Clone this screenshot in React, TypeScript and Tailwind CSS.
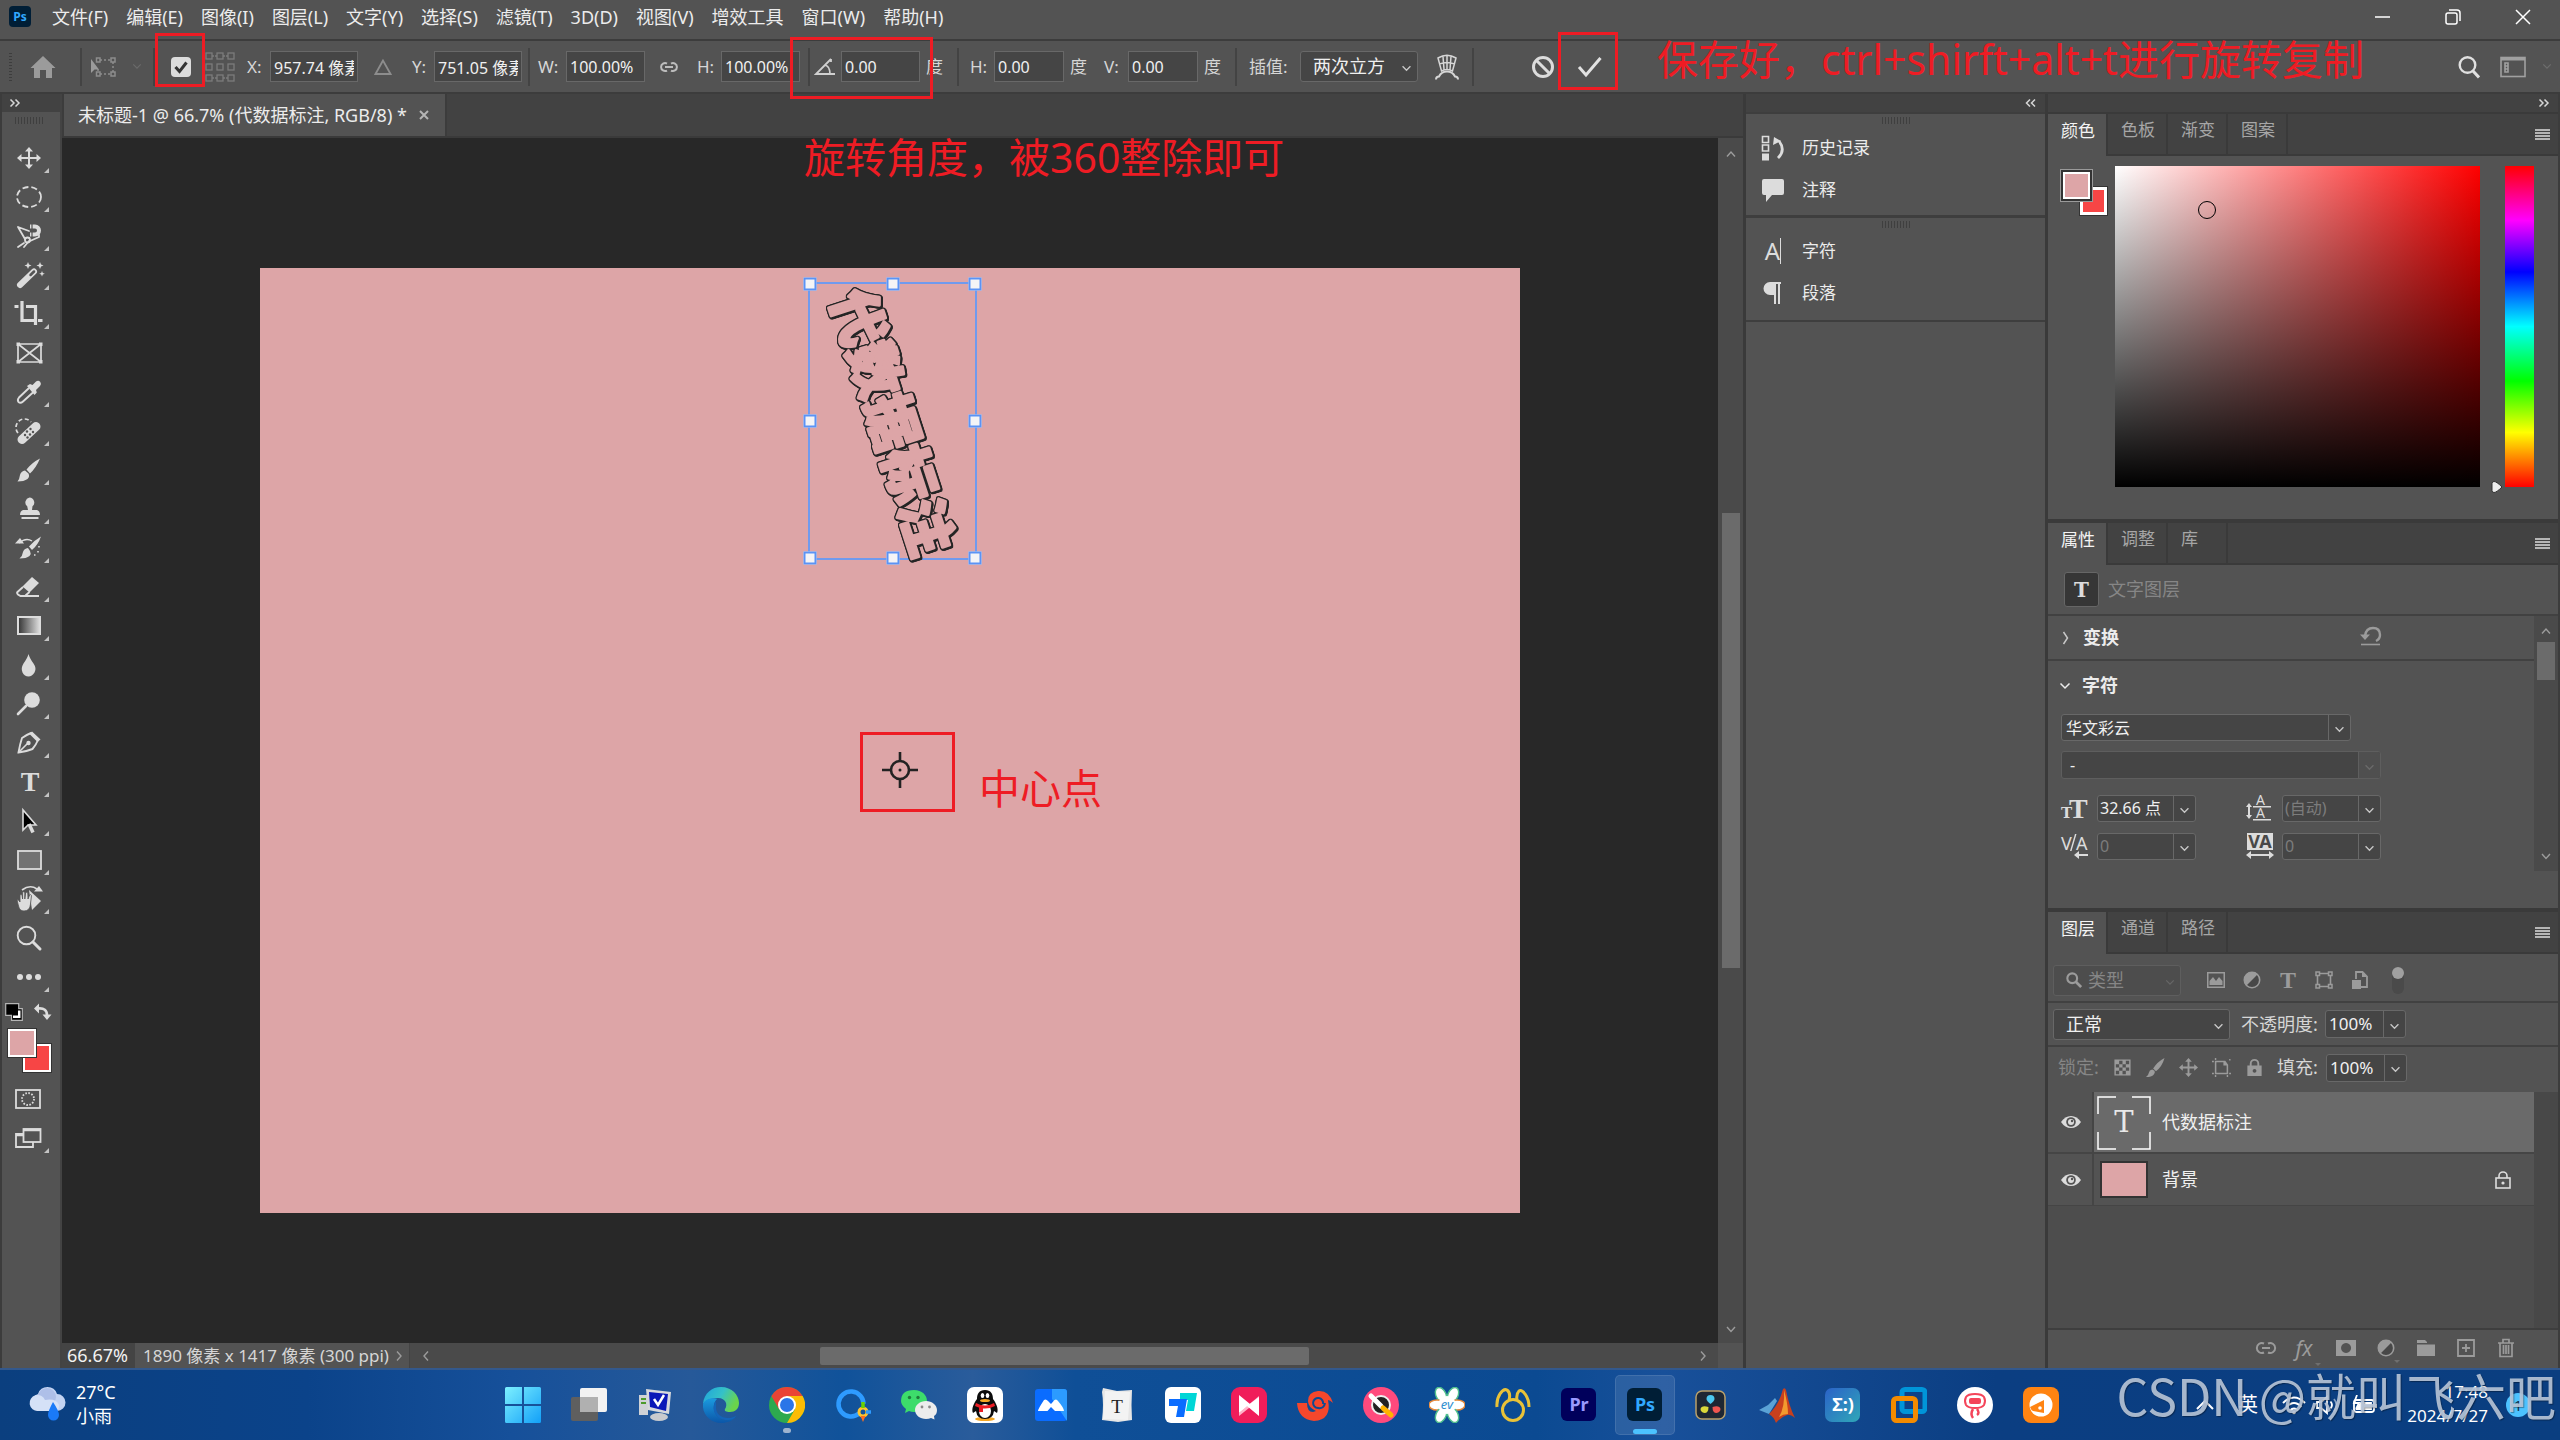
import React from "react";

type Kids = { children?: React.ReactNode };

/* ---------- small shared pieces ---------- */

const Chevron = ({ className = "h-2 w-3" }: { className?: string }) => (
  <svg viewBox="0 0 12 8" className={className} fill="none" stroke="currentColor" strokeWidth="1.5">
    <path d="M1.5 1.5 6 6l4.5-4.500" />
  </svg>
);

const Sep = ({ className = "" }: { className?: string }) => (
  <span className={`h-[38px] w-[2px] shrink-0 bg-[#434343] ${className}`} />
);

const MenuLines = () => (
  <button aria-label="面板菜单" className="mr-2 flex w-[15px] flex-col gap-[1px]">
    <span className="h-[2px] bg-[#b5b5b5]" />
    <span className="h-[2px] bg-[#b5b5b5]" />
    <span className="h-[2px] bg-[#b5b5b5]" />
    <span className="h-[2px] bg-[#b5b5b5]" />
  </button>
);

const Grip = () => (
  <div className="h-[7px] w-7 bg-[repeating-linear-gradient(to_right,#3f3f3f_0_1px,transparent_1px_3px)]" />
);

function OptField({ id, value, className, label }: { id: string; value: string; className: string; label?: string }) {
  return (
    <input
      id={id}
      aria-label={label}
      defaultValue={value}
      className={`h-[31px] shrink-0 border border-[#686868] bg-[#454545] px-[3px] text-[16px] text-[#f0f0f0] outline-none ${className}`}
    />
  );
}

function OptLabel({ htmlFor, className, children }: Kids & { htmlFor: string; className: string }) {
  return (
    <label htmlFor={htmlFor} className={`shrink-0 whitespace-nowrap text-[17px] text-[#d6d6d6] ${className}`}>
      {children}
    </label>
  );
}

function Drop({
  label,
  value,
  className,
  divided = false,
  dim = false,
  pad = "pl-1",
  tone = "text-[#f0f0f0]",
  size = "text-[16px]",
}: {
  label: string;
  value: string;
  className: string;
  divided?: boolean;
  dim?: boolean;
  pad?: string;
  tone?: string;
  size?: string;
}) {
  return (
    <div
      className={`relative flex shrink-0 items-stretch overflow-hidden rounded-[3px] border bg-[#454545] ${
        dim ? "border-[#5e5e5e]" : "border-[#686868]"
      } ${className}`}
    >
      <select aria-label={label} className={`w-full appearance-none bg-transparent outline-none ${pad} ${tone} ${size}`}>
        <option>{value}</option>
      </select>
      <span
        className={`pointer-events-none absolute inset-y-0 right-0 flex w-[22px] items-center justify-center ${
          divided ? (dim ? "border-l border-[#5e5e5e] bg-[#4f4f4f]" : "border-l border-[#686868]") : ""
        } ${dim ? "text-[#6a6a6a]" : "text-[#c8c8c8]"}`}
      >
        <Chevron className="mt-1 h-[7px] w-[11px]" />
      </span>
    </div>
  );
}

/* ---------- menu bar ---------- */

const menus = [
  "文件(F)", "编辑(E)", "图像(I)", "图层(L)", "文字(Y)", "选择(S)", "滤镜(T)",
  "3D(D)", "视图(V)", "增效工具", "窗口(W)", "帮助(H)",
];

function MenuBar() {
  return (
    <header className="flex h-[41px] items-center border-b-2 border-[#3c3c3c] bg-[#535353] pb-[6px] pl-[9px]">
      <span className="flex h-[21px] w-[22px] items-center justify-center rounded-[4px] bg-[#001e36] text-[12px] font-bold text-[#31a8ff]">
        Ps
      </span>
      <nav className="ml-[21px] flex gap-[18px]">
        {menus.map((m) => (
          <button key={m} className="whitespace-nowrap text-[18px] leading-6 text-[#ececec]">
            {m}
          </button>
        ))}
      </nav>
      <div className="ml-auto flex items-center gap-[54px] pr-[29px] text-white">
        <button aria-label="最小化">
          <svg viewBox="0 0 16 16" className="h-4 w-4" stroke="currentColor" strokeWidth="1.5"><path d="M0 8h15" /></svg>
        </button>
        <button aria-label="还原">
          <svg viewBox="0 0 16 16" className="h-4 w-4" fill="none" stroke="currentColor" strokeWidth="1.5">
            <rect x="1" y="4" width="11" height="11" rx="2" />
            <path d="M4 1h8a3 3 0 0 1 3 3v8" />
          </svg>
        </button>
        <button aria-label="关闭">
          <svg viewBox="0 0 16 16" className="h-4 w-4" stroke="currentColor" strokeWidth="1.5"><path d="m1 1 14 14M15 1 1 15" /></svg>
        </button>
      </div>
    </header>
  );
}

/* ---------- options bar ---------- */

const ReferenceGrid = () => (
  <svg viewBox="0 0 30 30" className="ml-[14px] h-[30px] w-[30px] shrink-0" fill="none" stroke="#7c7c7c" strokeWidth="1.3">
    {[1, 12, 23].map((y) => [1, 12, 23].map((x) => <rect key={`${x}-${y}`} x={x} y={y} width="6" height="6" />))}
    <path d="M7 4h5M18 4h5M7 26h5M18 26h5" strokeDasharray="2 1" />
  </svg>
);

function OptionsBar() {
  return (
    <section aria-label="选项" className="relative z-10 flex h-[53px] items-center border-b-2 border-[#3c3c3c] bg-[#535353] pl-[9px]">
      <span className="h-7 w-[3px] shrink-0 bg-[repeating-linear-gradient(to_bottom,#3d3d3d_0_1px,transparent_1px_3px)]" />
      <button aria-label="主页" className="ml-[18px] shrink-0">
        <svg viewBox="0 0 26 24" className="h-6 w-[26px]" fill="#9b9b9b"><path d="M13 1 .5 13H4v10h6v-8h6v8h6V13h3.500z" /></svg>
      </button>
      <Sep className="ml-6" />
      <svg viewBox="0 0 26 22" className="ml-2 h-[22px] w-[26px] shrink-0" fill="none" stroke="#8d8d8d" strokeWidth="1.5">
        <path d="M10 4h11M10 18h11M23 6v10M8 13v3" strokeDasharray="2 2" />
        <path d="M6.500 2h3.500v4H6.500zM21 2h4v4h-4zM6.500 16h3.500v4H6.500zM21 16h4v4h-4z" />
        <path d="M1 3v14l3.500-3.500H9z" fill="#9b9b9b" stroke="none" />
      </svg>
      <span className="ml-4 text-[#6a6a6a]"><Chevron className="h-[7px] w-[10px]" /></span>
      <Sep className="ml-[11px]" />
      <span className="relative ml-4 h-5 w-5 shrink-0">
        <input id="ref" type="checkbox" defaultChecked aria-label="切换参考点" className="block h-5 w-5 appearance-none rounded-[4px] bg-[#dcdcdc]" />
        <svg viewBox="0 0 20 20" className="pointer-events-none absolute inset-0 h-5 w-5" fill="none" stroke="#333" strokeWidth="3"><path d="m4.500 10 4 4.500 7-9" /></svg>
        <span className="pointer-events-none absolute -left-4 -top-6 h-[54px] w-[50px] border-3 border-[#ee1c24]" />
      </span>
      <ReferenceGrid />
      <OptLabel htmlFor="px" className="ml-3 w-[23px]">X:</OptLabel>
      <OptField id="px" value="957.74 像素" className="w-[88px]" />
      <svg viewBox="0 0 18 18" className="ml-4 h-[18px] w-[18px] shrink-0" fill="none" stroke="#8d8d8d" strokeWidth="1.8"><path d="M9 2.500 1.500 16h15z" /></svg>
      <OptLabel htmlFor="py" className="ml-5 w-[22px]">Y:</OptLabel>
      <OptField id="py" value="751.05 像素" className="w-[88px]" />
      <Sep className="ml-[6px]" />
      <OptLabel htmlFor="pw" className="ml-2 w-7">W:</OptLabel>
      <OptField id="pw" value="100.00%" className="w-[79px]" />
      <svg viewBox="0 0 20 12" className="ml-[14px] h-3 w-5 shrink-0" fill="none" stroke="#bdbdbd" strokeWidth="2">
        <path d="M8 9.500A4 4 0 1 1 8 2.500M12 2.500a4 4 0 1 1 0 7M6 6h8" />
      </svg>
      <OptLabel htmlFor="ph" className="ml-[18px] w-6">H:</OptLabel>
      <OptField id="ph" value="100.00%" className="w-[79px]" />
      <Sep className="ml-2" />
      <div className="relative ml-1 flex shrink-0 items-center">
        <svg viewBox="0 0 22 18" className="h-[18px] w-[22px]" fill="none" stroke="#d0d0d0" strokeWidth="1.8">
          <path d="M17 1 2 16h19M17 1v3M11 7c4 1 5 4 5 9" />
        </svg>
        <OptField id="ang" label="旋转角度" value="0.00" className="ml-[5px] w-[79px]" />
        <span className="ml-[6px] text-[17px] text-[#d6d6d6]">度</span>
        <span className="pointer-events-none absolute -left-6 -top-[14px] h-[62px] w-[143px] border-3 border-[#ee1c24]" />
        <span className="pointer-events-none absolute -left-[10px] top-[86px] whitespace-nowrap text-[41px] leading-[40px] text-[#ee1c24]">
          旋转角度，被360整除即可
        </span>
      </div>
      <Sep className="ml-[14px]" />
      <OptLabel htmlFor="sh" className="ml-[11px] w-6">H:</OptLabel>
      <OptField id="sh" value="0.00" className="w-[70px]" />
      <span className="ml-[6px] shrink-0 text-[17px] text-[#d6d6d6]">度</span>
      <OptLabel htmlFor="sv" className="ml-[17px] w-6">V:</OptLabel>
      <OptField id="sv" value="0.00" className="w-[70px]" />
      <span className="ml-[6px] shrink-0 text-[17px] text-[#d6d6d6]">度</span>
      <Sep className="ml-[14px]" />
      <span className="ml-3 w-[51px] shrink-0 text-[17px] text-[#d6d6d6]">插值:</span>
      <Drop label="插值" value="两次立方" className="h-[31px] w-[118px]" pad="pl-3" size="text-[18px]" />
      <button aria-label="变形" className="ml-4 shrink-0">
        <svg viewBox="0 0 26 26" className="h-[26px] w-[26px]" fill="none" stroke="#d6d6d6" strokeWidth="1.5">
          <path d="M4 4q9-5.500 18 0l-3.500 13q-5.500-3-11 0zM5.500 10q7.500-3 15 0M13 1.500V15.500M9 2.500l1 13M17 2.500l-1 13" />
          <path d="M2 25.500Q2 22.500 5 22.500 7.500 17.500 13 17.500T21 22.500q3 0 3 3" strokeWidth="2" />
        </svg>
      </button>
      <Sep className="ml-3" />
      <button aria-label="取消变换" className="ml-[57px] shrink-0">
        <svg viewBox="0 0 24 24" className="h-6 w-6" fill="none" stroke="#dcdcdc" strokeWidth="3"><circle cx="12" cy="12" r="9.5" /><path d="m5.500 5.500 13 13" /></svg>
      </button>
      <div className="relative ml-[22px] shrink-0">
        <button aria-label="提交变换" className="block">
          <svg viewBox="0 0 25 22" className="h-[22px] w-[25px]" fill="none" stroke="#e2e2e2" strokeWidth="3"><path d="m2 11 7 8L23.500 2" /></svg>
        </button>
        <span className="pointer-events-none absolute -left-[19px] -top-6 h-[58px] w-[60px] border-3 border-[#ee1c24]" />
        <span className="pointer-events-none absolute -top-[17px] left-[80px] whitespace-nowrap text-[41px] leading-[40px] text-[#ee1c24]">
          保存好，ctrl+shirft+alt+t进行旋转复制
        </span>
      </div>
      <div className="ml-auto flex items-center gap-5 pr-2">
        <button aria-label="搜索">
          <svg viewBox="0 0 22 24" className="h-6 w-[22px]" fill="none" stroke="#e0e0e0" strokeWidth="2.4"><circle cx="9.5" cy="10" r="7.8" /><path d="m15 16 6 6.500" strokeWidth="3" /></svg>
        </button>
        <button aria-label="工作区" className="flex items-center gap-4">
          <svg viewBox="0 0 26 22" className="h-[22px] w-[26px]" fill="none" stroke="#a0a0a0" strokeWidth="1.6">
            <rect x="1" y="1.5" width="24" height="19" /><path d="M1 3h24" strokeWidth="3" /><path d="M5 7h3v3H5zM5 10h3v3H5zM5 13h3v3H5z" />
          </svg>
          <span className="text-[#6d6d6d]"><Chevron className="h-[7px] w-[10px]" /></span>
        </button>
      </div>
    </section>
  );
}

/* ---------- tools ---------- */

const L = "#dcdcdc";
const Stroke = ({ d, w = 2 }: { d: string; w?: number }) => (
  <path d={d} fill="none" stroke={L} strokeWidth={w} strokeLinecap="round" strokeLinejoin="round" />
);

const tools: { name: string; sub?: boolean; art: React.ReactNode }[] = [
  {
    name: "移动工具", sub: true,
    art: <><path d="M13 4v18M4 13h18" stroke={L} strokeWidth="2" /><path d="m13 2 4 4.500H9zM13 24l4-4.500H9zM1 13l4.500-4v8zM25 13l-4.500-4v8z" fill={L} /></>,
  },
  { name: "椭圆选框工具", sub: true, art: <ellipse cx="13" cy="13" rx="12" ry="10" fill="none" stroke={L} strokeWidth="1.8" strokeDasharray="6 3" /> },
  {
    name: "磁性套索工具", sub: true,
    art: (
      <>
        <Stroke w={1.8} d="M2 4 9 16M2 4l11 4M2 24l6-4M8 24l5-6M14 18l9-4v-2" />
        <circle cx="11.5" cy="17" r="2.5" fill="none" stroke={L} strokeWidth="1.8" />
        <path d="M14 3.500h5a4 4 0 0 1 0 8h-5" fill="none" stroke={L} strokeWidth="4" />
        <path d="M16 1v5M16 9v5" stroke="#535353" strokeWidth="1.2" />
      </>
    ),
  },
  {
    name: "魔棒工具", sub: true,
    art: (
      <>
        <path d="M4 23 18 9.500" stroke={L} strokeWidth="6" strokeLinecap="round" />
        <path d="M14.500 13 18 9.500" stroke="#535353" strokeWidth="2.5" strokeLinecap="round" />
        <path d="m12 0 1 2.500 2.500 1L13 4.500 12 7l-1-2.500-2.500-1L11 2.500zM24 0l1 2.500 2.500 1-2.500 1L24 7l-1-2.500-2.500-1 2.500-1zM26 9l.8 2 2 .8-2 .8-.8 2-.8-2-2-.8 2-.8z" fill={L} />
      </>
    ),
  },
  {
    name: "裁剪工具", sub: true,
    art: <><path d="M6 0v19.500h12M10 5.500h9.500V24" fill="none" stroke={L} strokeWidth="3.2" /><path d="M-1.500 5.500h4M22 19.500h4.500" stroke={L} strokeWidth="3" /></>,
  },
  {
    name: "图框工具",
    art: (
      <>
        <path d="M2 4h23v18H2zM2 4l23 18M25 4 2 22" fill="none" stroke={L} strokeWidth="1.7" />
        <path d="M.5 2.500h3.500V6H.5zM23 2.500h3.500V6H23zM.5 20h3.500v3.500H.5zM23 20h3.500v3.500H23z" fill={L} />
      </>
    ),
  },
  {
    name: "吸管工具", sub: true,
    art: (
      <>
        <path d="M13 9 3 18.500Q1 21 2.500 23q2 1.800 4.500-.5L17.500 13" fill="none" stroke={L} strokeWidth="1.9" />
        <path d="m11 7 3-2 2.500 1L20 2.500Q22.500 1 24.300 3q1.500 2-.3 4l-4 4 .8 2.500-2.300 2.500z" fill={L} />
      </>
    ),
  },
  {
    name: "污点修复画笔工具", sub: true,
    art: (
      <>
        <path d="M2 15a8 8 0 1 1 13-11" fill="none" stroke={L} strokeWidth="1.7" strokeDasharray="4 2.5" />
        <path d="M6 21.500 20 8.500" stroke={L} strokeWidth="9" strokeLinecap="round" />
        <g fill="#535353"><circle cx="11" cy="13.5" r="1.2" /><circle cx="14" cy="16.5" r="1.2" /><circle cx="14.5" cy="11" r="1.2" /><circle cx="17" cy="14" r="1.2" /><circle cx="9" cy="17" r="1.2" /><circle cx="11.5" cy="19.5" r="1.2" /></g>
      </>
    ),
  },
  {
    name: "画笔工具", sub: true,
    art: <path d="M24 1.500q-8 4-13.500 11l3.500 4Q20 11 24 1.500zM9 13.500q-4 .5-5 4.500-.5 4-2.500 6.500 6.500 0 10-2.500 2.500-2.500 1-5.500z" fill={L} />,
  },
  {
    name: "仿制图章工具", sub: true,
    art: <><path d="M13.500 1.500a5 5 0 0 1 3 8.800L16 14h5q3 1 3 5H4q0-4 3-5h5l-.8-3.700a5 5 0 0 1 2.300-8.800z" fill={L} /><path d="M5.500 22h17" stroke={L} strokeWidth="2" /></>,
  },
  {
    name: "历史记录画笔工具", sub: true,
    art: (
      <>
        <path d="M25 1.500q-7 4-12 10l3 3.500Q22 10 25 1.500zM12 13q-4 .5-5 4-.5 4-3.500 6.500 7 0 10-2.500 2-2.500.5-5z" fill={L} />
        <path d="M3 8q7-6 13-2" fill="none" stroke={L} strokeWidth="1.5" /><path d="M-1 8.500h9L4 3z" fill={L} />
        <path d="M23 11v2M22 16v2M18 20h2" stroke={L} strokeWidth="1.6" strokeDasharray="1.5 1.5" />
      </>
    ),
  },
  {
    name: "橡皮擦工具", sub: true,
    art: <><path d="m16 3 7 6-9.500 9.500-7-6z" fill={L} /><path d="M7 13 1.500 18q-1 1 .5 2.500L4.500 22H23M9.500 21.500l4-3.500" fill="none" stroke={L} strokeWidth="1.9" /></>,
  },
  {
    name: "渐变工具", sub: true,
    art: <><defs><linearGradient id="toolGrad"><stop offset="0" stopColor="#333" /><stop offset="1" stopColor="#e0e0e0" /></linearGradient></defs><rect x="2" y="4" width="22" height="17" fill="url(#toolGrad)" stroke={L} strokeWidth="2" /></>,
  },
  { name: "模糊工具", sub: true, art: <path d="M12.500 2q1 4 5 9.500 3.500 5 1 9t-6 4q-4 0-6-4t1-9q4-5.500 5-9.500z" fill={L} /> },
  { name: "减淡工具", sub: true, art: <><circle cx="16" cy="9" r="7.8" fill={L} /><path d="m10 15-8 8" stroke={L} strokeWidth="2.6" strokeLinecap="round" /></> },
  {
    name: "钢笔工具", sub: true,
    art: (
      <>
        <path d="M15 3q-4 1.500-9 5-2 6-3.500 14.500 8-1 14-3.500 3.500-4 5.500-9z" fill="none" stroke={L} strokeWidth="1.9" />
        <path d="m16 1.500 8.500 8-3 2.500-8-8z" fill={L} /><circle cx="12.5" cy="13" r="2.2" fill={L} /><path d="m3 22 9-9" stroke={L} strokeWidth="1.6" />
      </>
    ),
  },
  { name: "横排文字工具", sub: true, art: <text x="14" y="22" textAnchor="middle" fill={L} fontSize="28" fontWeight="700" fontFamily="Liberation Serif, serif">T</text> },
  {
    name: "路径选择工具", sub: true,
    art: <><path d="M7 2v20l5-5h8z" fill="#000" stroke={L} strokeWidth="1.6" /><path d="m13 16 4 8.500" stroke={L} strokeWidth="3.5" /></>,
  },
  { name: "矩形工具", sub: true, art: <rect x="2" y="4" width="23" height="18" fill="#727272" stroke={L} strokeWidth="1.8" /> },
  {
    name: "旋转视图工具", sub: true,
    art: (
      <>
        <path d="M13 4 25 15l-9 9z" fill={L} />
        <path d="M1 14q1.500-1 3 2V9q1-1.500 2 0l.6 4V6.500q1-1.500 2.200 0V13l.8-6q1.200-1.500 2.200.2L12 13l1.600-4q1.300-1 1.900.5L14.500 18q-.5 7-6.500 7-4.500 0-5.500-5z" fill={L} stroke="#535353" strokeWidth=".8" />
        <path d="M6 4q8-6 15-1" fill="none" stroke={L} strokeWidth="1.6" /><path d="M18 5.500h9L23 0z" fill={L} />
      </>
    ),
  },
  { name: "缩放工具", art: <><circle cx="10.5" cy="10.5" r="8.8" fill="none" stroke={L} strokeWidth="1.9" /><path d="m17 17 7 7" stroke={L} strokeWidth="3" strokeLinecap="round" /></> },
  { name: "编辑工具栏", sub: true, art: <g fill={L}><circle cx="4" cy="13" r="3" /><circle cx="13" cy="13" r="3" /><circle cx="22" cy="13" r="3" /></g> },
];

function ToolBar() {
  return (
    <aside className="flex w-[62px] shrink-0 flex-col border-x-2 border-[#3c3c3c] border-r-[#434343] bg-[#535353]">
      <button aria-label="展开工具栏" className="flex h-[18px] items-center bg-[#424242] pl-[7px] text-[#d6d6d6]">
        <svg viewBox="0 0 12 8" className="h-2 w-3" fill="none" stroke="currentColor" strokeWidth="1.5"><path d="m1.500.5 3.500 3.500-3.500 3.500M6.500.5 10 4 6.500 7.500" /></svg>
      </button>
      <div className="mb-[15px] mt-[5px] flex pl-[13px]"><Grip /></div>
      {tools.map((t) => (
        <button key={t.name} aria-label={t.name} className="block h-[39px] w-14 shrink-0">
          <svg viewBox="0 0 56 39" className="h-[39px] w-14">
            <g transform="translate(14 6)">{t.art}</g>
            {t.sub && <path d="M47 29v5h-5z" fill="#c4c4c4" />}
          </svg>
        </button>
      ))}
      <div className="mt-[6px] flex items-center justify-between pl-[3px] pr-2">
        <button aria-label="默认颜色">
          <svg viewBox="0 0 18 18" className="h-[18px] w-[18px]"><path d="M.7.7h13v5h3.600v11.600H6.500v-5H.7z" fill="#000" stroke="#b5b5b5" strokeWidth="1.2" /><path d="M8 15h7.500V7.500H13v5H8z" fill="#fff" /></svg>
        </button>
        <button aria-label="切换颜色">
          <svg viewBox="0 0 18 18" className="h-[18px] w-[18px]"><path d="M4 5.500q9-1 9 7" fill="none" stroke={L} strokeWidth="2.6" /><path d="m0 5.500 5-5v10zM8.500 11.500h9l-4.500 5.500z" fill={L} /></svg>
        </button>
      </div>
      <div className="relative ml-[5px] mt-[7px] h-[45px] w-[45px]">
        <button aria-label="背景色" className="absolute bottom-0 right-0 h-[30px] w-[30px] border border-[#333] bg-white p-[2px]"><span className="block h-full bg-[#f74545]" /></button>
        <button aria-label="前景色" className="absolute left-0 top-0 h-[30px] w-[30px] border border-[#333] bg-white p-[2px]"><span className="block h-full bg-[#dda5a7]" /></button>
      </div>
      <button aria-label="快速蒙版" className="mt-[7px] h-[39px]">
        <svg viewBox="0 0 56 39" className="h-[39px] w-14" fill="none" stroke={L} strokeWidth="1.8"><rect x="14" y="10" width="24" height="18" /><circle cx="26" cy="19" r="6" strokeDasharray="1.6 1.5" /></svg>
      </button>
      <button aria-label="屏幕模式" className="h-[39px]">
        <svg viewBox="0 0 56 39" className="h-[39px] w-14" fill="none" stroke={L} strokeWidth="1.8"><path d="M21 15h-7v13h17v-5" /><rect x="21.5" y="10" width="17" height="13" /><path d="M21.500 11h17M14 16h7" strokeWidth="2.6" /><path d="M47 29v5h-5z" fill="#c4c4c4" stroke="none" /></svg>
      </button>
    </aside>
  );
}

/* ---------- document ---------- */

const Handle = ({ className }: { className: string }) => (
  <span className={`absolute h-[13px] w-[13px] -translate-x-1/2 -translate-y-1/2 border-2 border-[#5b93f5] bg-[#f4f4f6] ${className}`} />
);

function Artboard() {
  return (
    <div className="relative h-[945px] w-[1260px] shrink-0 bg-[#dda5a7]">
      <div className="absolute left-[548px] top-[14px] h-[278px] w-[169px] border-2 border-[#6f9aee]">
        <svg
          viewBox="0 0 169 278"
          className="absolute -left-[2px] -top-[2px] h-[278px] w-[169px] overflow-visible [filter:drop-shadow(1px_0_0_#252525)_drop-shadow(-1px_0_0_#252525)_drop-shadow(0_1px_0_#252525)_drop-shadow(0_-1px_0_#252525)_drop-shadow(1px_1px_0_#252525)]"
        >
          <text
            x="0"
            y="20"
            textAnchor="middle"
            transform="translate(84 140) rotate(72)"
            fontFamily="Noto Sans CJK SC, sans-serif"
            fontSize="55"
            fontWeight="900"
            fill="#dda5a7"
            stroke="#dda5a7"
            strokeWidth="3"
            strokeLinejoin="round"
          >
            代数据标注
          </text>
        </svg>
        <Handle className="left-0 top-0" />
        <Handle className="left-1/2 top-0" />
        <Handle className="left-full top-0" />
        <Handle className="left-0 top-1/2" />
        <Handle className="left-full top-1/2" />
        <Handle className="left-0 top-full" />
        <Handle className="left-1/2 top-full" />
        <Handle className="left-full top-full" />
      </div>
      <div className="absolute left-[600px] top-[464px] flex h-[80px] w-[95px] border-3 border-[#ee1c24]">
        <svg viewBox="0 0 36 36" className="ml-[19px] mt-[17px] h-9 w-9" fill="none" stroke="#222" strokeWidth="2.6">
          <circle cx="18" cy="18" r="9" /><path d="M18 0v9M18 27v9M0 18h9M27 18h9" /><circle cx="18" cy="18" r="1.5" fill="#222" stroke="none" />
        </svg>
      </div>
      <span className="absolute left-[719px] top-[500px] whitespace-nowrap text-[41px] leading-[40px] text-[#ee1c24]">中心点</span>
    </div>
  );
}

const Arrow = ({ dir }: { dir: "up" | "down" | "left" | "right" }) => {
  const paths = { up: "M2 8.500 6 4l4 4.500", down: "M2 4l4 4.500L10 4", left: "M8 1.500 4 6l4 4.500", right: "M4 1.500 8 6l-4 4.500" };
  return <svg viewBox="0 0 12 12" className="h-3 w-3 shrink-0" fill="none" stroke="#9c9c9c" strokeWidth="1.4"><path d={paths[dir]} /></svg>;
};

function DocumentArea() {
  return (
    <main className="flex min-w-0 flex-1 flex-col border-r-[3px] border-[#3a3a3a] bg-[#424242]">
      <div className="flex h-[44px] border-b-2 border-[#3a3a3a]">
        <div className="flex items-center gap-3 border-x-2 border-[#3c3c3c] bg-[#535353] pl-[14px] pr-4 text-[18px] text-[#ececec]">
          <span className="whitespace-nowrap">未标题-1 @ 66.7% (代数据标注, RGB/8) *</span>
          <button aria-label="关闭文档">
            <svg viewBox="0 0 10 10" className="h-[10px] w-[10px]" stroke="#b5b5b5" strokeWidth="2"><path d="m1 1 8 8M9 1 1 9" /></svg>
          </button>
        </div>
      </div>
      <div className="flex flex-1">
        <div className="flex flex-1 items-center justify-center overflow-hidden bg-[#282828]"><Artboard /></div>
        <div className="flex w-[25px] flex-col items-center bg-[#4a4a4a] pb-2 pt-[10px]">
          <Arrow dir="up" />
          <div className="flex-[353]" />
          <div className="w-[18px] flex-[454] bg-[#6b6b6b]" />
          <div className="flex-[355]" />
          <Arrow dir="down" />
        </div>
      </div>
      <footer className="flex h-[25px] items-center bg-[#4a4a4a] text-[17px] text-[#d6d6d6]">
        <span className="w-[73px] shrink-0 bg-[#444] pl-[5px] text-[18px] leading-[25px] text-[#f2f2f2]">66.67%</span>
        <button className="flex h-[25px] shrink-0 items-center gap-1 whitespace-nowrap border-r border-[#444] bg-[#535353] pl-2 pr-1">
          <span>1890 像素 x 1417 像素 (300 ppi)</span>
          <Arrow dir="right" />
        </button>
        <div className="flex flex-1 items-center justify-between pl-[10px] pr-[9px]">
          <Arrow dir="left" />
          <div className="h-[18px] w-[38%] rounded-[2px] bg-[#6b6b6b]" />
          <Arrow dir="right" />
        </div>
        <div className="h-[25px] w-[25px] bg-[#535353]" />
      </footer>
    </main>
  );
}

/* ---------- collapsed dock ---------- */

function DockItem({ icon, children }: Kids & { icon: React.ReactNode }) {
  return (
    <button className="flex h-[42px] items-center gap-[17px] pl-[15px] text-left text-[17px] text-[#ececec]">
      <span className="flex h-[26px] w-[24px] items-center justify-center text-[#dcdcdc]">{icon}</span>
      {children}
    </button>
  );
}

function Dock() {
  return (
    <aside className="flex w-[302px] shrink-0 flex-col border-r-[3px] border-[#3a3a3a] bg-[#535353]">
      <button aria-label="展开面板" className="flex h-[18px] items-center justify-end bg-[#424242] pr-2 text-[#d6d6d6]">
        <svg viewBox="0 0 12 8" className="h-2 w-3" fill="none" stroke="currentColor" strokeWidth="1.5"><path d="M5 .5 1.500 4 5 7.500M10 .5 6.500 4 10 7.500" /></svg>
      </button>
      <div className="flex flex-col border-b-[3px] border-t-2 border-[#3e3e3e] pb-1">
        <div className="flex h-[13px] items-center justify-center"><Grip /></div>
        <DockItem
          icon={
            <svg viewBox="0 0 24 26" className="h-[26px] w-6" fill="none" stroke="currentColor" strokeWidth="1.6">
              <path d="M1.500 1.500h6v6h-6zM1.500 10h6v6h-6z" /><path d="M1 18.500h7v7H1z" fill="currentColor" stroke="none" /><path d="M17 23q8-8 1-17" strokeWidth="2.8" /><path d="m12 10 1-8 7 4z" fill="currentColor" stroke="none" />
            </svg>
          }
        >
          历史记录
        </DockItem>
        <DockItem icon={<svg viewBox="0 0 24 24" className="h-6 w-6" fill="currentColor"><path d="M3 1h18q2 0 2 2v12q0 2-2 2H11l-6 7v-7H3q-2 0-2-2V3q0-2 2-2z" /></svg>}>注释</DockItem>
      </div>
      <div className="flex flex-col border-b-2 border-[#3e3e3e] pb-[6px]">
        <div className="flex h-3 items-center justify-center"><Grip /></div>
        <DockItem icon={<span className="flex h-[26px] items-center border-r border-[#dcdcdc] text-[24px] leading-6">A</span>}>字符</DockItem>
        <DockItem icon={<svg viewBox="0 0 24 24" className="h-6 w-6" fill="currentColor"><path d="M9 1h11v2h-1v20h-2V3h-2v20h-2V14H9a6.500 6.500 0 0 1 0-13z" /></svg>}>段落</DockItem>
      </div>
    </aside>
  );
}

/* ---------- right panels ---------- */

function Tabs({ names }: { names: string[] }) {
  return (
    <div className="flex h-[44px] items-start justify-between border-t-2 border-[#3a3a3a] bg-[#424242]">
      <div role="tablist" className="flex h-full">
        {names.map((n, i) => (
          <button
            key={n}
            role="tab"
            aria-selected={i === 0}
            className={`min-w-[60px] border-r-2 border-[#3a3a3a] pb-2 pl-[13px] text-left text-[17px] ${
              i === 0 ? "bg-[#535353] text-[#f4f4f4]" : "border-b-2 text-[#a6a6a6]"
            }`}
          >
            {n}
          </button>
        ))}
      </div>
      <div className="flex h-full flex-1 items-center justify-end border-b-2 border-[#3a3a3a]"><MenuLines /></div>
    </div>
  );
}

function ColorPanel() {
  return (
    <section aria-label="颜色">
      <Tabs names={["颜色", "色板", "渐变", "图案"]} />
      <div className="flex h-[363px] pl-[13px] pt-[10px]">
        <div className="relative mt-1 h-[46px] w-[47px]">
          <button aria-label="背景色" className="absolute bottom-0 right-0 h-[30px] w-[29px] border border-[#333] bg-white p-[3px]"><span className="block h-full bg-[#f74545]" /></button>
          <button aria-label="前景色" className="absolute left-0 top-0 h-[31px] w-[31px] border-2 border-[#333] bg-white p-[2px] outline outline-[#9a9a9a]"><span className="block h-full bg-[#dda5a7]" /></button>
        </div>
        <div className="relative ml-[7px] h-[321px] w-[365px] bg-[linear-gradient(to_top,#000,transparent),linear-gradient(to_right,#fff,#f00)]">
          <span className="absolute left-[83px] top-[35px] h-[18px] w-[18px] rounded-full border border-black" />
        </div>
        <div className="relative ml-[25px] h-[321px] w-[29px] bg-[linear-gradient(to_bottom,#f00,#f0f_17%,#00f_33%,#0ff_50%,#0f0_67%,#ff0_83%,#f00)]">
          <svg viewBox="0 0 12 12" className="absolute -bottom-[6px] -left-[14px] h-3 w-3"><path d="M1 2.500q0-2 2-2 2.500 0 8 5.500-5.500 5.500-8 5.500-2 0-2-2z" fill="#eee" stroke="#333" /></svg>
        </div>
      </div>
    </section>
  );
}

const Ico = ({ children }: Kids) => (
  <svg viewBox="0 0 28 26" className="h-7 w-7 shrink-0 overflow-visible" fill="#dcdcdc">{children}</svg>
);

function PropertiesPanel() {
  return (
    <section aria-label="属性" className="border-t-2 border-[#3a3a3a]">
      <Tabs names={["属性", "调整", "库"]} />
      <div className="flex h-[51px] items-center gap-[9px] border-b-2 border-[#414141] pl-4 text-[18px] text-[#868686]">
        <span className="flex h-[35px] w-[35px] items-center justify-center rounded-[3px] border border-[#666] bg-[#363636] font-['DejaVu_Serif'] text-[20px] font-bold text-[#dcdcdc]">T</span>
        文字图层
      </div>
      <div className="flex">
        <div className="flex-1">
          <div className="flex h-[45px] items-center border-b-2 border-[#414141] pl-3">
            <button className="flex items-center gap-[11px] text-[18px] font-bold text-[#ececec]">
              <svg viewBox="0 0 8 14" className="mx-[2px] h-[14px] w-2" fill="none" stroke="#c8c8c8" strokeWidth="1.5"><path d="m1.500 1 4 6-4 6" /></svg>
              变换
            </button>
            <button aria-label="重置变换" className="mb-1 ml-[241px]">
              <svg viewBox="0 0 22 20" className="h-5 w-[22px]" fill="none" stroke="#9b9b9b" strokeWidth="2.4"><path d="M5 10Q6 2 13 2t7 7q0 4-4 6" /><path d="M0 8.500h10L5 14z" fill="#9b9b9b" stroke="none" /><path d="M1 18.500h19" strokeWidth="1.6" /></svg>
            </button>
          </div>
          <button className="flex h-[49px] items-center gap-[11px] pl-[11px] text-[18px] font-bold text-[#ececec]">
            <Chevron className="h-2 w-3" />
            字符
          </button>
          <div className="flex flex-col gap-[10px] pb-12 pl-[13px] pt-1">
            <Drop label="字体" value="华文彩云" className="h-[27px] w-[290px]" divided />
            <Drop label="字体样式" value="-" className="h-[28px] w-[320px]" pad="pl-2" divided dim />
            <div className="mt-[5px] grid grid-cols-[36px_99px_50px_36px_99px] items-center gap-y-[10px]">
              <Ico><text x="0" y="23" fontSize="15" fontWeight="700" fontFamily="DejaVu Serif, serif">T</text><text x="8" y="23" fontSize="28" fontWeight="700" fontFamily="Liberation Serif, serif">T</text></Ico>
              <Drop label="字号" value="32.66 点" className="h-[27px] w-[99px]" divided pad="pl-[2px]" />
              <span />
              <Ico><path d="m3 8 3 4H4v8h2l-3 4-3-4h2v-8H0z" /><text x="10" y="10" fontSize="14" fontFamily="Noto Sans">A</text><text x="10" y="23" fontSize="14" fontFamily="Noto Sans">A</text><path d="M7 11h18v1.500H7zM7 24h18v1.500H7z" /></Ico>
              <Drop label="行距" value="(自动)" className="h-[27px] w-[99px]" divided pad="pl-[2px]" tone="text-[#7c7c7c]" />
              <Ico><text x="0" y="17" fontSize="18" fontFamily="Noto Sans">V</text><text x="15" y="17" fontSize="18" fontFamily="Noto Sans">A</text><path d="m9 18 5-17h1.500L10.500 18z" /><path d="m13 22 5-4v3h9v2h-9v3z" /></Ico>
              <Drop label="字距微调" value="0" className="h-[27px] w-[99px]" divided pad="pl-[2px]" tone="text-[#7c7c7c]" />
              <span />
              <Ico><path d="M1 0h26v17H1z" /><text x="14" y="15" textAnchor="middle" fontSize="18" fontWeight="700" fontFamily="Noto Sans" fill="#484848">VA</text><path d="m0 22 5-4v3h18v-3l5 4-5 4v-3H5v3z" /></Ico>
              <Drop label="字距调整" value="0" className="h-[27px] w-[99px]" divided pad="pl-[2px]" tone="text-[#7c7c7c]" />
            </div>
          </div>
        </div>
        <div className="mb-[37px] flex w-6 flex-col items-center bg-[#4a4a4a] pb-[9px] pt-[9px]">
          <Arrow dir="up" />
          <div className="mt-[5px] h-[38px] w-[18px] bg-[#6b6b6b]" />
          <div className="flex-1" />
          <Arrow dir="down" />
        </div>
      </div>
    </section>
  );
}

const Eye = () => (
  <button aria-label="可见性" className="flex w-[46px] shrink-0 items-center justify-center border-r-2 border-[#454545] bg-[#535353] pl-[2px]">
    <svg viewBox="0 0 20 14" className="h-[14px] w-5"><path d="M0 7q4-6 10-6t10 6q-4 6-10 6T0 7z" fill="#dcdcdc" /><circle cx="10" cy="7" r="4.8" fill="#535353" /><circle cx="10" cy="7" r="3" fill="#dcdcdc" /><circle cx="11" cy="6" r="1.2" fill="#535353" /></svg>
  </button>
);

const G = "#9b9b9b";
const FilterBtn = ({ name, children }: Kids & { name: string }) => (
  <button aria-label={name} className="flex w-9 items-center justify-center">
    <svg viewBox="0 0 20 20" className="h-5 w-5 overflow-visible" fill={G}>{children}</svg>
  </button>
);

function LayersPanel() {
  return (
    <section aria-label="图层" className="flex flex-1 flex-col border-t-2 border-[#3a3a3a]">
      <Tabs names={["图层", "通道", "路径"]} />
      <div className="flex h-[49px] items-center border-b-2 border-[#414141] pl-[5px] pt-[5px]">
        <div className="relative flex h-[31px] w-[128px] items-center rounded-[3px] border border-[#5e5e5e] bg-[#4d4d4d]">
          <svg viewBox="0 0 18 18" className="absolute left-3 h-4 w-4" fill="none" stroke={G} strokeWidth="2.4"><circle cx="7" cy="7" r="5.5" /><path d="m11 11 6 6" strokeWidth="3" /></svg>
          <select aria-label="滤镜类型" className="w-full appearance-none bg-transparent pl-[34px] text-[18px] text-[#868686] outline-none"><option>类型</option></select>
          <span className="pointer-events-none absolute right-[5px] top-[13px] text-[#666]"><Chevron className="h-[7px] w-[10px]" /></span>
        </div>
        <div className="ml-[17px] flex">
          <FilterBtn name="像素图层"><path d="M1 2h18v16H1zM2.500 3.500v13h15v-13z" fillRule="evenodd" /><path d="M3.500 15v-4L7 7l3 4 3-4 3.500 4v4z" /></FilterBtn>
          <FilterBtn name="调整图层"><circle cx="10" cy="10" r="7.7" fill="#484848" stroke={G} strokeWidth="1.6" /><path d="M4.300 15.700A8 8 0 0 1 15.700 4.300z" /></FilterBtn>
          <FilterBtn name="文字图层"><text x="10" y="18" textAnchor="middle" fontSize="24" fontWeight="700" fontFamily="Liberation Serif, serif">T</text></FilterBtn>
          <FilterBtn name="形状图层"><path d="M3.500 3.500h13v13h-13z" fill="none" stroke={G} strokeWidth="1.6" /><path d="M2 2h3.500v3.500H2zM14.500 2H18v3.500h-3.500zM2 14.500h3.500V18H2zM14.500 14.500H18V18h-3.500z" fill="#535353" stroke={G} strokeWidth="1.5" /></FilterBtn>
          <FilterBtn name="智能对象"><path d="M6 9V2h6.500L17 6.500V17h-6" fill="none" stroke={G} strokeWidth="1.8" /><path d="M12 2v5h5M2 10h9v9H2z" /></FilterBtn>
        </div>
        <button aria-label="图层过滤开关" className="ml-[14px] flex h-[27px] w-3 justify-center rounded-full bg-[#4a4a4a]"><span className="h-3 w-3 rounded-full bg-[#a0a0a0]" /></button>
      </div>
      <div className="flex h-[44px] items-center border-b-2 border-[#414141] pl-[5px]">
        <Drop label="混合模式" value="正常" className="h-[31px] w-[177px]" pad="pl-3" size="text-[18px]" />
        <span className="ml-[11px] w-[84px] text-[18px] text-[#d6d6d6]">不透明度:</span>
        <Drop label="不透明度" value="100%" className="h-[28px] w-[81px]" divided size="text-[17px]" pad="pl-[3px]" />
      </div>
      <div className="flex h-[45px] items-center pb-[4px] pl-[10px]">
        <span className="w-[48px] text-[18px] text-[#868686]">锁定:</span>
        <div className="flex text-[#9b9b9b]">
          {[
            <path key="a" fillRule="evenodd" d="M1.500 1.500h17v17h-17zM3 6.500v3.500h3.500V6.500zM6.500 3v3.500H10V3zM10 6.500V10h3.500V6.500zM13.500 3v3.500H17V3zM6.500 10v3.500H10V10zM3 13.500V17h3.500v-3.500zM13.500 10v3.500H17V10zM10 13.500V17h3.500v-3.500z" />,
            <path key="b" d="M19.500 0Q12 4 7.500 11l3 3Q17 9 19.500 0zM6.500 12q-3 .5-3.500 3.500T0 20q6 0 8-2.500 2-2 1-4z" />,
            <path key="c" d="m10 0 3.500 4H11v5h5V6.500l4 3.500-4 3.500V11h-5v5h2.500L10 20l-3.500-4H9v-5H4v2.500L0 10l4-3.500V9h5V4H6.500z" />,
            <path key="d" fillRule="evenodd" d="M3 3h11l3 4v10H3zM4.600 4.600v10.800h10.800V8H12V4.600zM0 3h2v1.500H0zM0 15.500h2V17H0zM18 15.500h2V17h-2zM3 0h1.500v2H3zM3 18h1.500v2H3zM15.500 18H17v2h-1.500zM18 1h1.500v1.500H18z" />,
            <path key="e" fillRule="evenodd" d="M2.500 8H5V6a5 5 0 0 1 10 0v2h2.500v11h-15zM7 8h6V6a3 3 0 0 0-6 0zM10 11.500a2 2 0 1 0 .1 0z" />,
          ].map((p, i) => (
            <button key={i} aria-label={["锁定透明像素", "锁定图像像素", "锁定位置", "防止嵌套", "锁定全部"][i]} className="flex w-[33px] justify-center">
              <svg viewBox="0 0 20 20" className="h-[19px] w-[19px]" fill="currentColor">{p}</svg>
            </button>
          ))}
        </div>
        <span className="ml-[6px] w-[49px] text-[18px] text-[#d6d6d6]">填充:</span>
        <Drop label="填充" value="100%" className="h-[28px] w-[81px]" divided size="text-[17px]" pad="pl-[3px]" />
      </div>
      <div className="flex flex-1 bg-[#4d4d4d]">
        <ul className="flex-1">
          <li className="flex h-[62px] border-b-2 border-[#454545] bg-[#6a6a6a]">
            <Eye />
            <span className="relative ml-[3px] mt-1 flex h-[54px] w-[54px] items-center justify-center font-['DejaVu_Serif'] text-[29px] text-[#e8e8e8]">
              T
              <svg viewBox="0 0 54 54" className="absolute inset-0 h-[54px] w-[54px]" fill="none" stroke="#fff" strokeWidth="1.5"><path d="M1 18V1h18M35 1h18v17M1 36v17h18M35 53h18V36" /></svg>
            </span>
            <span className="ml-[11px] self-center text-[18px] text-[#f0f0f0]">代数据标注</span>
          </li>
          <li className="flex h-[52px] border-b border-[#454545] bg-[#535353]">
            <Eye />
            <span className="ml-[6px] h-[37px] w-[48px] self-center border-2 border-[#333] bg-[#dda5a7]" />
            <span className="ml-[14px] self-center text-[18px] text-[#f0f0f0]">背景</span>
            <svg viewBox="0 0 16 18" className="ml-auto mr-[23px] h-[18px] w-4 self-center" fill="none" stroke="#dcdcdc" strokeWidth="1.6"><rect x="1" y="7" width="14" height="10" /><path d="M4 7V5a4 4 0 0 1 8 0v2" /><circle cx="8" cy="12" r="1.6" fill="#dcdcdc" stroke="none" /></svg>
          </li>
        </ul>
        <div className="w-6 bg-[#484848]" />
      </div>
      <div className="flex h-[40px] items-center justify-end gap-[18px] border-t-2 border-[#3e3e3e] pb-[2px] pr-[41px] text-[#9b9b9b]">
        <button aria-label="链接图层"><svg viewBox="0 0 22 20" className="h-5 w-[22px]" fill="none" stroke={G} strokeWidth="2"><path d="M9 14.500a5 5 0 1 1 0-9M13 5.500a5 5 0 1 1 0 9M7 10h8" /></svg></button>
        <button aria-label="图层样式" className="relative w-[22px] pr-1 text-[21px] italic leading-5">fx<span className="absolute -bottom-2 -right-1 border-x-3 border-t-3 border-x-transparent border-t-[#6f6f6f]" /></button>
        <button aria-label="图层蒙版"><svg viewBox="0 0 22 20" className="h-5 w-[22px]" fill={G}><path fillRule="evenodd" d="M1 2h20v16H1zM11 5a5 5 0 1 0 .1 0z" /></svg></button>
        <button aria-label="调整" className="relative"><svg viewBox="0 0 22 20" className="h-5 w-[22px]" fill={G}><circle cx="11" cy="10" r="7.7" fill="#484848" stroke={G} strokeWidth="1.6" /><path d="M5.300 15.700A8 8 0 0 1 16.700 4.300z" /></svg><span className="absolute -bottom-[5px] -right-[3px] border-x-3 border-t-3 border-x-transparent border-t-[#6f6f6f]" /></button>
        <button aria-label="新建组"><svg viewBox="0 0 22 20" className="h-5 w-[22px]" fill={G}><path d="M2 2h8l2 2v1H2zM2 6.500h18V18H2z" /></svg></button>
        <button aria-label="新建图层"><svg viewBox="0 0 22 20" className="h-5 w-[22px]" fill="none" stroke={G} strokeWidth="1.8"><path d="M3 2h16v16H3zM11 6v8M7 10h8" /></svg></button>
        <button aria-label="删除图层"><svg viewBox="0 0 22 20" className="h-5 w-[22px]" fill="none" stroke={G} strokeWidth="1.7"><path d="M3 5h16M8 4.500V1.500h6v3M5 5v13.500h12V5M8.500 7v9M11 7v9M13.500 7v9" /></svg></button>
      </div>
    </section>
  );
}

function RightPanels() {
  return (
    <aside className="flex w-[512px] shrink-0 flex-col border-r-2 border-[#3c3c3c] bg-[#535353]">
      <button aria-label="折叠面板" className="flex h-[18px] items-center justify-end bg-[#424242] pr-2 text-[#d6d6d6]">
        <svg viewBox="0 0 12 8" className="h-2 w-3" fill="none" stroke="currentColor" strokeWidth="1.5"><path d="m1.500.5 3.500 3.500-3.500 3.500M6.500.5 10 4 6.500 7.500" /></svg>
      </button>
      <ColorPanel />
      <PropertiesPanel />
      <LayersPanel />
    </aside>
  );
}

/* ---------- taskbar ---------- */

const sans = "Noto Sans, sans-serif";

const apps: { name: string; art: React.ReactNode }[] = [
  {
    name: "开始",
    art: <><defs><linearGradient id="win" x1="0" y1="0" x2="1" y2="1"><stop offset="0" stopColor="#7df0ff" /><stop offset="1" stopColor="#12a0f8" /></linearGradient></defs><path d="M0 1.500Q0 0 1.500 0H17v17H0zM19 0h15.500Q36 0 36 1.500V17H19zM0 19h17v17H1.500Q0 36 0 34.500zM19 19h17v15.500Q36 36 34.500 36H19z" fill="url(#win)" /></>,
  },
  { name: "任务视图", art: <><rect x="0" y="10" width="27" height="24" rx="2" fill="#5f5f5f" /><rect x="9" y="1" width="27" height="24" rx="2" fill="#f2f2f2" /><path d="M9 10h18v15H9z" fill="#b0b0b0" /></> },
  {
    name: "远程桌面",
    art: <><path d="M2 8h9v20H2z" fill="#cfd2d6" /><path d="M4 12h5M4 16h5" stroke="#4c9a2a" strokeWidth="2" /><path d="m9 2 25 3-2 22-21-4z" fill="#d6d8dc" /><path d="m12 5 19 2-2 17-16-4z" fill="#0a18b8" /><path d="m17 12 4 6 6-10" stroke="#fff" strokeWidth="2.5" fill="none" /><ellipse cx="22" cy="30" rx="9" ry="4" fill="#c8cace" /></>,
  },
  {
    name: "Edge",
    art: <><defs><linearGradient id="edgeA" x1="0" y1="0" x2="1" y2=".4"><stop offset="0" stopColor="#1fa3dc" /><stop offset=".55" stopColor="#35c1c8" /><stop offset="1" stopColor="#6ad44b" /></linearGradient><linearGradient id="edgeB" x1="0" y1="0" x2="0" y2="1"><stop offset="0" stopColor="#1b9be0" /><stop offset="1" stopColor="#0b56a8" /></linearGradient></defs><path d="M0 17C1 6 9 0 18 0c11 0 18 8 18 16 0 6-4 9-9 9-4 0-6-1-5-3 3-4 1-11-7-11C7 11 2 14 0 17z" fill="url(#edgeA)" /><path d="M0 17c2-5 9-7 14-5-4 3-6 15 4 20 6 3 11 0 15-3-3 5-9 7-15 7C8 36-1 28 0 17z" fill="url(#edgeB)" /><path d="M13 14c-6 8 0 20 13 19 3-.5 6-2 7-4-10 5-20 0-20-8z" fill="#1464b8" /></>,
  },
  {
    name: "Chrome",
    art: <><circle cx="18" cy="18" r="18" fill="#2da94f" /><path d="M2.400 9A18 18 0 0 1 33.600 9H18L10.200 22.500z" fill="#ea4335" /><path d="M33.600 9A18 18 0 0 1 18 36l7.800-13.500L18 9z" fill="#fbbc05" /><circle cx="18" cy="18" r="9" fill="#fff" /><circle cx="18" cy="18" r="7" fill="#2b75e8" /></>,
  },
  { name: "搜索客户端", art: <><circle cx="16" cy="17" r="12.5" fill="none" stroke="#2e9bff" strokeWidth="4.5" strokeDasharray="67 12" transform="rotate(50 16 17)" /><circle cx="28" cy="25" r="4" fill="none" stroke="#ffc42e" strokeWidth="3" /><path d="M28 35l-2.500-6h5z" fill="#ff6d1f" /><path d="M28 15v6" stroke="#6bd100" strokeWidth="3.5" /><path d="M31 25h5" stroke="#2e9bff" strokeWidth="3.5" /></> },
  { name: "微信", art: <><path d="M13 3c8 0 13 5 13 11s-5 11-13 11q-3 0-5-1l-4 2 1-4Q0 18 0 14 0 3 13 3z" fill="#3ddc6b" /><circle cx="8.5" cy="10.5" r="1.7" fill="#1f7a3a" /><circle cx="17" cy="10.5" r="1.7" fill="#1f7a3a" /><path d="M25 14c6 0 11 4 11 9 0 3-1 5-3 6l.5 3.500L30 31q-2 1-5 1c-6 0-11-4-11-9s5-9 11-9z" fill="#ececec" /><circle cx="21" cy="20" r="1.4" fill="#888" /><circle cx="28.5" cy="20" r="1.4" fill="#888" /></> },
  { name: "QQ", art: <><rect width="36" height="36" rx="7" fill="#fff" /><ellipse cx="18" cy="32" rx="10" ry="2" fill="#f5a623" /><path d="M18 3c6 0 8 4 8 9 3 4 6 10 4 14l-3-2q-1 8-9 8t-9-8l-3 2c-2-4 1-10 4-14 0-5 2-9 8-9z" fill="#0c0c0c" /><ellipse cx="18" cy="24" rx="6" ry="7" fill="#fff" /><path d="M9 16q9 5 18 0l1 3q-10 5-20 0zM12 19l4 1v5h-4z" fill="#ec1c24" /><ellipse cx="15.5" cy="8.5" rx="1.8" ry="2.6" fill="#fff" /><ellipse cx="20.5" cy="8.5" rx="1.8" ry="2.6" fill="#fff" /><ellipse cx="18" cy="13.5" rx="5" ry="1.6" fill="#f5a623" /></> },
  { name: "腾讯会议", art: <><rect x="2" y="2" width="32" height="32" rx="3" fill="#0a6cff" /><path d="M19 2h12q3 0 3 3v29L19 12z" fill="#2c9bff" /><path d="M5 24q0-2 6-11 2-1.500 4 1l3 3 3.500-4q2-1.500 3.500 1 6 7 6 10h-9l-4-4-3.500 4z" fill="#fff" /></> },
  { name: "Typora", art: <><path d="m4 1 14 3 15-1q-1 15 0 30l-14 2-16-2q2-16 0-28z" fill="#e6e6e6" /><path d="m6 4 25 1-2 28-25-1z" fill="#f3f3f3" /><text x="18" y="26" textAnchor="middle" fontSize="19" fontFamily="Liberation Serif, serif" fill="#222">T</text></> },
  { name: "ToDesk", art: <><rect width="36" height="36" rx="6" fill="#fff" /><path d="M15 6h17l-3 18h-8l2-11h-8z" fill="#00d6d6" /><path d="M4 12h18l-3 18h-8l2-11H4z" fill="#0a6cff" /></> },
  { name: "剪辑软件", art: <><rect width="36" height="36" rx="9" fill="#f01d5a" /><path d="M8 26 28 9v4L8 29z" fill="#ffb3c8" /><path d="M8 8 19 17 8 26zM28 10v19L16 19z" fill="#fff" /></> },
  { name: "龙卷风工具", art: <><path d="M0 16h10q0 9 6 9 0 0 3-1-8-4-8-10 0-9 10-10 11-1 15 12-3-3-5-3 4 20-14 21Q1 32 0 16z" fill="#f5472c" /><path d="M26 17a5 5 0 1 0-5 4q6 1 7-5" fill="none" stroke="#0b4a92" strokeWidth="2" /></> },
  { name: "调色工具", art: <><circle cx="18" cy="18" r="18" fill="#ff4a7d" /><circle cx="18" cy="18" r="9" fill="#222" stroke="#eee" strokeWidth="2" /><path d="m8 9 10 10" stroke="#fff" strokeWidth="5" strokeLinecap="round" /><path d="m20 21 8 7" stroke="#ffb400" strokeWidth="5" strokeLinecap="round" /></> },
  { name: "EV录屏", art: <><g fill="#fff" stroke="#52c08e" strokeWidth="1.4"><ellipse cx="12" cy="8" rx="5" ry="8" transform="rotate(-25 12 8)" /><ellipse cx="24" cy="8" rx="5" ry="8" transform="rotate(25 24 8)" /><ellipse cx="8" cy="18" rx="8" ry="5" stroke="#e98b3a" /><ellipse cx="28" cy="18" rx="8" ry="5" stroke="#e98b3a" /><ellipse cx="12" cy="28" rx="5" ry="8" transform="rotate(25 12 28)" /><ellipse cx="24" cy="28" rx="5" ry="8" transform="rotate(-25 24 28)" /></g><circle cx="18" cy="18" r="9" fill="#fff" /><text x="18" y="22" textAnchor="middle" fontSize="13" fontStyle="italic" fontFamily={sans} fill="#2f8fd0">ev</text></> },
  { name: "Navicat", art: <g fill="none" stroke="#e9c238" strokeWidth="3"><circle cx="18" cy="23" r="10.5" /><path d="M2 20C1 9 8 1 12 3q4 3 2 10M34 20C34 9 27 2 24 4q-3 3-2 9" /></g> },
  { name: "Premiere", art: <><rect y="1" width="35" height="33" rx="6" fill="#00005b" /><text x="18" y="24" textAnchor="middle" fontSize="18" fontWeight="700" fontFamily={sans} fill="#9999ff">Pr</text></> },
  { name: "Photoshop", art: <><rect y="1" width="35" height="33" rx="6" fill="#001e36" /><text x="18" y="24" textAnchor="middle" fontSize="18" fontWeight="700" fontFamily={sans} fill="#31a8ff">Ps</text></> },
  { name: "DaVinci", art: <><rect x="3" y="4" width="29" height="28" rx="6" fill="#1e2733" stroke="#b9a06a" strokeWidth="1.5" /><path d="M17.500 17q-4-3-4-5 0-4 4-4t4 4q0 2-4 5z" fill="#4cc8f0" /><path d="M15.500 20q0 6-4 6-4-1-4-4 1-4 8-2z" fill="#d9d83a" /><path d="M19.500 20q0 6 4 6 4-1 4-4-1-4-8-2z" fill="#f0554f" /></> },
  { name: "MATLAB", art: <><path d="m0 23 9-5 7-7 2 3-8 13z" fill="#5aa2d6" /><path d="M10 27Q20 18 24 2q2-2 3 1 3 16 9 28-5-4-8-3-6 2-11 8-2-6-7-9z" fill="#c8401e" /><path d="M20 30Q26 20 25 3q4 14 4 24-5 0-9 3z" fill="#f29a2e" /></> },
  { name: "公式工具", art: <><defs><linearGradient id="sig" x1="0" y1="0" x2="1" y2="1"><stop offset="0" stopColor="#2b62c8" /><stop offset="1" stopColor="#2fa7b8" /></linearGradient></defs><rect y="1" width="35" height="34" rx="7" fill="url(#sig)" /><text x="18" y="24" textAnchor="middle" fontSize="18" fontWeight="700" fontFamily={sans} fill="#fff">Σ:)</text></> },
  { name: "VMware", art: <g fill="none" strokeWidth="5"><rect x="11" y="2.5" width="23" height="22" rx="3" stroke="#0095d9" /><rect x="2.5" y="11.5" width="22" height="22" rx="3" stroke="#f38b00" /></g> },
  { name: "助手", art: <><circle cx="18" cy="18" r="18" fill="#fff" /><path d="M9 10q2-3 9-3t9 3q2 4 0 8-2 3-9 3t-9-3q-2-4 0-8z" fill="none" stroke="#f4455a" strokeWidth="2" /><rect x="12" y="11" width="12" height="6" rx="2" fill="#f4455a" /><path d="M16 22q-3 5 0 9M20 22q3 4 0 6" stroke="#f4455a" strokeWidth="2.5" fill="none" /></> },
  { name: "数据助手", art: <><rect width="36" height="36" rx="8" fill="#ff8412" /><circle cx="18" cy="18" r="11.5" fill="#fff" /><path d="M21 13 7 20q1 3 3 4l11 2z" fill="#ff8412" /><circle cx="17" cy="21" r="1.8" fill="#fff" /></> },
];

function TaskBar() {
  return (
    <footer className="relative grid h-[72px] grid-cols-[1fr_auto_1fr] items-center border-t-2 border-[#33588c] bg-[linear-gradient(to_right,#0b3f7f,#0b438a_12%,#16509a_20%,#265999_27%,#10529a_33%,#2a5c9b_38%,#0f4f97_42%,#0b4a92_60%,#18509a_65%,#0b3e82_78%,#0a3e80)] text-white">
      <button className="flex items-center gap-[10px] pb-[2px] pl-7 text-left text-[18px] leading-6">
        <svg viewBox="0 0 38 34" className="h-[34px] w-[38px]"><path d="M10 24a9 9 0 0 1 0-17 10 10 0 0 1 19 0 8.500 8.500 0 0 1 0 17z" fill="#c3d3f2" /><circle cx="19" cy="10" r="9" fill="#aebfe8" /><path d="M10 24a8 8 0 1 1 7-11q11-2 14 5 0 6-4 6z" fill="#d5e1f7" /><path d="M25 15q6 9 6 13a5.500 5.500 0 0 1-11 0q0-4 5-13z" fill="#1a7af8" /></svg>
        <span>27°C<br />小雨</span>
      </button>
      <nav className="flex pl-1">
        {apps.map((a) => (
          <button key={a.name} aria-label={a.name} className="relative flex h-[68px] w-[66px] items-center justify-center">
            {a.name === "Photoshop" && <span className="absolute inset-x-[3px] inset-y-1 rounded-[5px] border border-white/10 bg-white/10" />}
            <svg viewBox="0 0 36 36" className="relative h-9 w-9">{a.art}</svg>
            {a.name === "Photoshop" && <span className="absolute bottom-[5px] h-[5px] w-6 rounded-full bg-[#4cc2ff]" />}
            {a.name === "Chrome" && <span className="absolute bottom-[6px] h-[5px] w-2 rounded-full bg-[#9db3cf]" />}
          </button>
        ))}
      </nav>
      <div className="flex items-center justify-end pr-[30px]">
        <svg viewBox="0 0 18 12" className="h-3 w-[18px]" fill="none" stroke="#fff" strokeWidth="2"><path d="m1 10 8-8 8 8" /></svg>
        <span className="ml-6 text-[20px]">英</span>
        <svg viewBox="0 0 24 20" className="ml-6 h-5 w-6" fill="none" stroke="#fff" strokeWidth="2"><path d="M1 8q11-11 22 0M4.500 12q7.500-8 15 0M8 15.500q4-4 8 0" /><circle cx="12" cy="17.5" r="1.8" fill="#fff" stroke="none" /></svg>
        <svg viewBox="0 0 24 20" className="ml-[10px] h-5 w-6" fill="none" stroke="#fff" strokeWidth="1.8"><path d="M1 7h4l6-5v16l-6-5H1zM14.500 6.500q3 3.500 0 7" /><path d="M18 4q5 6 0 12" opacity=".5" /></svg>
        <svg viewBox="0 0 26 20" className="ml-3 h-5 w-[26px]" fill="none" stroke="#fff" strokeWidth="1.8"><rect x="2" y="5" width="20" height="12" rx="2.5" /><path d="M9 8h10v6H5z" fill="#fff" /><path d="M24 9v4M5 0 2 8h5l-3 6" /></svg>
        <button className="ml-[20px] w-[90px] whitespace-nowrap pb-[2px] text-right text-[17px] leading-6">17:48<br />2024/7/27</button>
        <span className="ml-[18px] flex h-6 w-6 items-center justify-center rounded-full bg-[#4cc2ff] text-[15px] text-[#12324f]">1</span>
      </div>
      <span className="pointer-events-none absolute -top-1 right-[4px] whitespace-nowrap font-['Noto_Sans_CJK_SC'] text-[50px] leading-[56px] text-[#b9c6d9]/90 [text-shadow:1px_1px_1px_rgba(0,0,0,0.35)]">
        CSDN @就叫飞六吧
      </span>
    </footer>
  );
}

export default function App() {
  return (
    <div className="flex min-h-screen flex-col bg-[#535353] font-['Noto_Sans','Noto_Sans_CJK_SC',sans-serif]">
      <MenuBar />
      <OptionsBar />
      <div className="flex flex-1">
        <ToolBar />
        <DocumentArea />
        <Dock />
        <RightPanels />
      </div>
      <TaskBar />
    </div>
  );
}
